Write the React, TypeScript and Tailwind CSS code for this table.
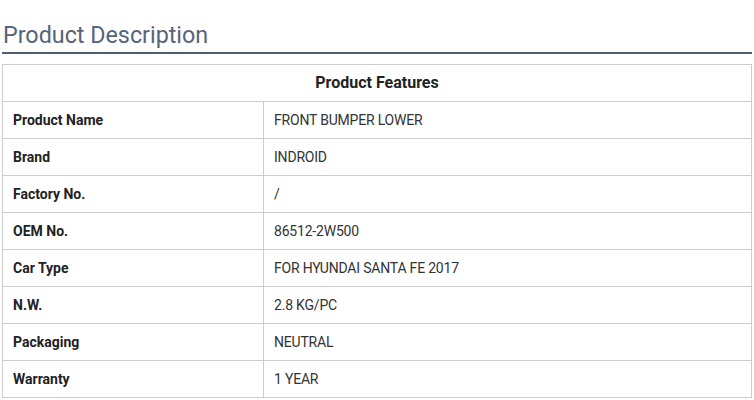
const rows: [string, string][] = [
  ['Product Name', 'FRONT BUMPER LOWER'],
  ['Brand', 'INDROID'],
  ['Factory No.', '/'],
  ['OEM No.', '86512-2W500'],
  ['Car Type', 'FOR HYUNDAI SANTA FE 2017'],
  ['N.W.', '2.8 KG/PC'],
  ['Packaging', 'NEUTRAL'],
  ['Warranty', '1 YEAR'],
];

export default function App() {
  return (
    <div className="min-h-[400px] bg-white pl-[2px] pr-[2px] pt-[20px] font-['Roboto',sans-serif]">
      <h2 className="border-b-2 border-[#4f5d73] pb-[2px] pl-px text-[23.3px] leading-[30px] text-[#56647a]">
        Product Description
      </h2>
      <table className="mt-[10px] w-[750px] border-collapse text-[14px] text-[#333]">
        <thead>
          <tr>
            <th
              colSpan={2}
              className="h-[37px] border border-[#ccc] text-center text-[16px] font-bold text-[#222]"
            >
              Product Features
            </th>
          </tr>
        </thead>
        <tbody>
          {rows.map(([label, value]) => (
            <tr key={label}>
              <td className="h-[37px] w-[261px] border border-[#ccc] pl-[10px] font-bold text-[#222]">
                {label}
              </td>
              <td className="h-[37px] border border-[#ccc] pl-[10px] tracking-[-0.2px] text-[#333]">{value}</td>
            </tr>
          ))}
        </tbody>
      </table>
    </div>
  );
}
